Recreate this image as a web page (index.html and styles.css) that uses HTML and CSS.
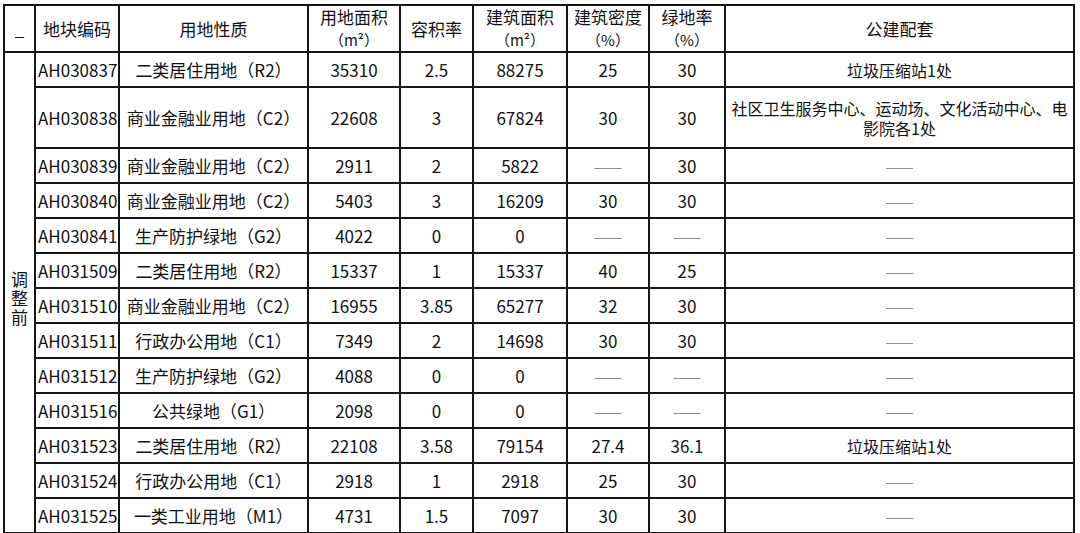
FILE: index.html
```html
<!DOCTYPE html>
<html lang="zh-CN">
<head>
<meta charset="utf-8">
<title>地块指标表</title>
<link rel="stylesheet" href="styles.css">
</head>
<body>
<table class="plan">
  <colgroup>
    <col class="c0"><col class="c1"><col class="c2"><col class="c3"><col class="c4"><col class="c5"><col class="c6"><col class="c7"><col class="c8">
  </colgroup>
  <thead>
    <tr class="head">
      <th class="blank">_</th>
      <th>地块编码</th>
      <th>用地性质</th>
      <th>用地面积<br><span class="unit">（m²）</span></th>
      <th>容积率</th>
      <th>建筑面积<br><span class="unit">（m²）</span></th>
      <th>建筑密度<br><span class="unit">（%）</span></th>
      <th>绿地率<br><span class="unit">（%）</span></th>
      <th>公建配套</th>
    </tr>
  </thead>
  <tbody>
    <tr>
      <td class="stage" rowspan="13">调整前</td>
      <td>AH030837</td><td>二类居住用地（R2）</td><td>35310</td><td>2.5</td><td>88275</td><td>25</td><td>30</td><td class="pub">垃圾压缩站1处</td>
    </tr>
    <tr class="tall">
      <td>AH030838</td><td>商业金融业用地（C2）</td><td>22608</td><td>3</td><td>67824</td><td>30</td><td>30</td><td class="pub">社区卫生服务中心、运动场、文化活动中心、电影院各1处</td>
    </tr>
    <tr>
      <td>AH030839</td><td>商业金融业用地（C2）</td><td>2911</td><td>2</td><td>5822</td><td class="na">——</td><td>30</td><td class="na">——</td>
    </tr>
    <tr>
      <td>AH030840</td><td>商业金融业用地（C2）</td><td>5403</td><td>3</td><td>16209</td><td>30</td><td>30</td><td class="na">——</td>
    </tr>
    <tr>
      <td>AH030841</td><td>生产防护绿地（G2）</td><td>4022</td><td>0</td><td>0</td><td class="na">——</td><td class="na">——</td><td class="na">——</td>
    </tr>
    <tr>
      <td>AH031509</td><td>二类居住用地（R2）</td><td>15337</td><td>1</td><td>15337</td><td>40</td><td>25</td><td class="na">——</td>
    </tr>
    <tr>
      <td>AH031510</td><td>商业金融业用地（C2）</td><td>16955</td><td>3.85</td><td>65277</td><td>32</td><td>30</td><td class="na">——</td>
    </tr>
    <tr>
      <td>AH031511</td><td>行政办公用地（C1）</td><td>7349</td><td>2</td><td>14698</td><td>30</td><td>30</td><td class="na">——</td>
    </tr>
    <tr>
      <td>AH031512</td><td>生产防护绿地（G2）</td><td>4088</td><td>0</td><td>0</td><td class="na">——</td><td class="na">——</td><td class="na">——</td>
    </tr>
    <tr>
      <td>AH031516</td><td>公共绿地（G1）</td><td>2098</td><td>0</td><td>0</td><td class="na">——</td><td class="na">——</td><td class="na">——</td>
    </tr>
    <tr>
      <td>AH031523</td><td>二类居住用地（R2）</td><td>22108</td><td>3.58</td><td>79154</td><td>27.4</td><td>36.1</td><td class="pub">垃圾压缩站1处</td>
    </tr>
    <tr>
      <td>AH031524</td><td>行政办公用地（C1）</td><td>2918</td><td>1</td><td>2918</td><td>25</td><td>30</td><td class="na">——</td>
    </tr>
    <tr>
      <td>AH031525</td><td>一类工业用地（M1）</td><td>4731</td><td>1.5</td><td>7097</td><td>30</td><td>30</td><td class="na">——</td>
    </tr>
    <tr class="cut">
      <td></td><td></td><td></td><td></td><td></td><td></td><td></td><td></td><td></td>
    </tr>
  </tbody>
</table>
</body>
</html>
```

FILE: styles.css
```css
html, body {
  margin: 0;
  padding: 0;
  background: #ffffff;
  overflow: hidden;
}

body {
  padding: 4px 0 0 3px;
  font-family: "Noto Sans CJK SC", "Noto Sans", sans-serif;
  color: #111111;
}

.plan {
  border-collapse: collapse;
  table-layout: fixed;
  width: 1072px;
  font-size: 17px;
}

.c0 { width: 31px; }
.c1 { width: 84px; }
.c2 { width: 189px; }
.c3 { width: 92px; }
.c4 { width: 73px; }
.c5 { width: 94px; }
.c6 { width: 82px; }
.c7 { width: 76px; }
.c8 { width: 349px; }

.plan th,
.plan td {
  border: 2px solid #161616;
  padding: 0 2px;
  text-align: center;
  vertical-align: middle;
  white-space: nowrap;
  overflow: hidden;
  font-weight: 400;
  line-height: 20px;
}

.plan tr {
  height: 35px;
}

.plan tr.head {
  height: 46px;
}

.plan tr.head th {
  line-height: 22px;
}

.plan tr.tall {
  height: 61px;
}

.plan tr.cut {
  height: 2px;
}

.plan tr.cut td {
  line-height: 0;
  padding: 0;
  border-bottom: 0;
}

.unit {
  font-size: 15px;
}

.blank {
  padding-top: 8px;
}

.plan td.stage {
  white-space: normal;
  line-height: 19px;
  padding: 10px 6px 0;
}

.plan td.pub {
  font-size: 16px;
  white-space: normal;
  padding: 0 4px;
}

.plan td.na {
  color: #8a8a8a;
}
```
